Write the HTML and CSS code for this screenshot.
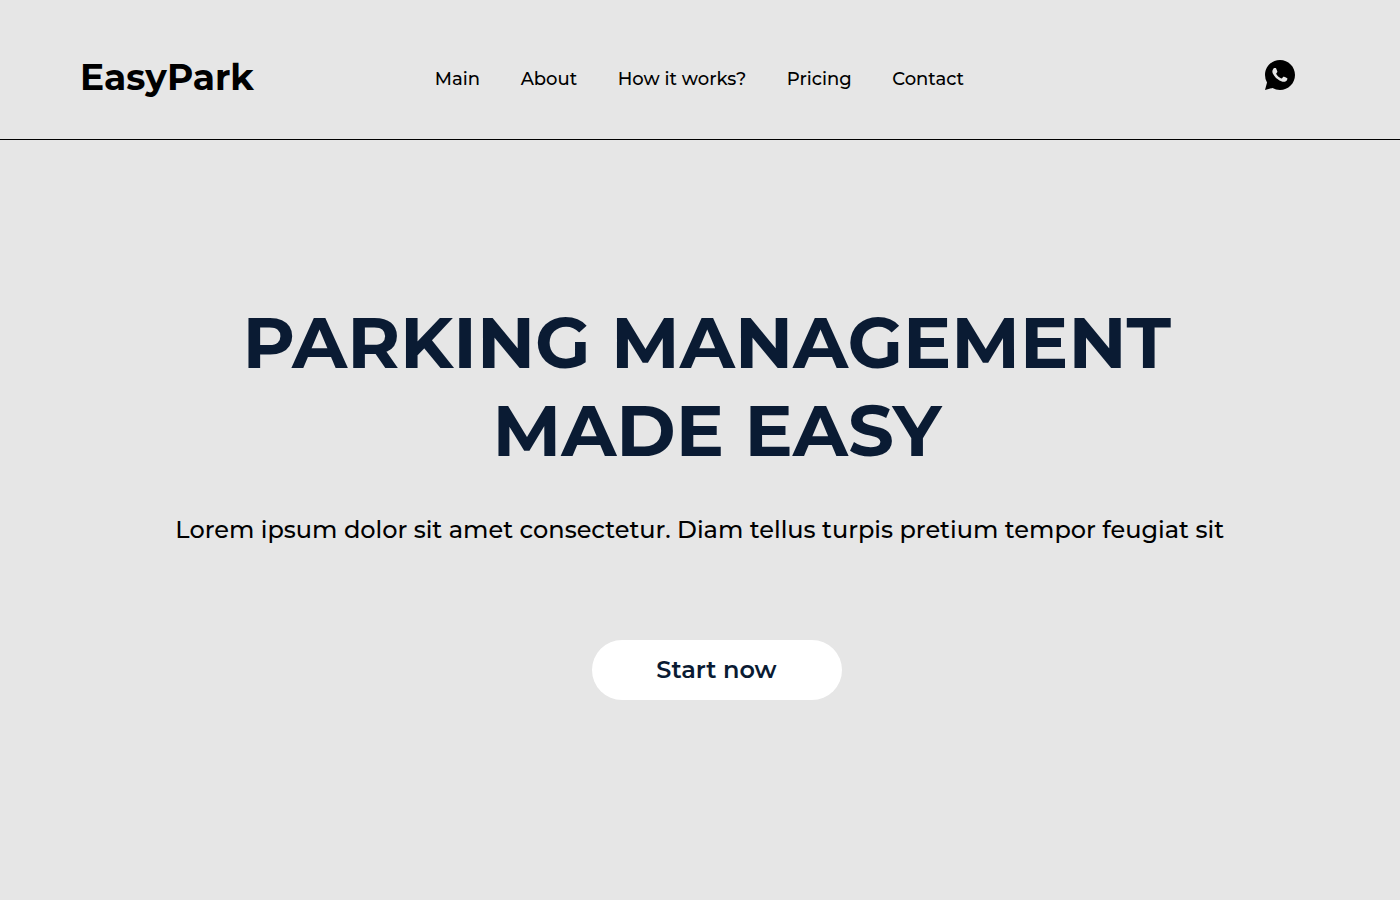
FILE: index.html
```
<!DOCTYPE html>
<html lang="en">
<head>
<meta charset="utf-8">
<title>EasyPark</title>
<link rel="stylesheet" href="styles.css">
</head>
<body>
<header class="header">
  <a class="logo">EasyPark</a>
  <nav class="nav">
    <a>Main</a>
    <a>About</a>
    <a>How it works?</a>
    <a>Pricing</a>
    <a>Contact</a>
  </nav>
  <a class="whatsapp" aria-label="WhatsApp">
    <svg width="30" height="30" viewBox="0 0 20 20">
      <path fill="#000" d="M0.004 20l1.352-4.968A9.954 9.954 0 0 1 0 10.001C0 4.478 4.478 0 10.001 0S20 4.478 20 10.001 15.524 20 10.001 20a9.954 9.954 0 0 1-5.03-1.355L0.004 20zM6.391 5.308a.961.961 0 0 0-.371.1 1.293 1.293 0 0 0-.294.228c-.12.113-.188.211-.261.306A2.729 2.729 0 0 0 4.9 7.62c.002.49.13.967.33 1.413.409.902 1.082 1.857 1.971 2.742.214.213.423.427.648.626a9.448 9.448 0 0 0 3.84 2.046l.569.087c.185.01.37-.004.556-.013a1.99 1.99 0 0 0 .833-.231c.166-.088.244-.132.383-.22 0 0 .043-.028.125-.09.135-.1.218-.171.33-.288.083-.086.155-.187.21-.302.078-.163.156-.474.188-.733.024-.198.017-.306.014-.373-.004-.107-.093-.218-.19-.265l-.582-.261s-.87-.379-1.401-.621a.498.498 0 0 0-.177-.041.482.482 0 0 0-.378.127c-.005-.002-.072.055-.795.931a.35.35 0 0 1-.368.13 1.416 1.416 0 0 1-.191-.066c-.124-.052-.167-.072-.252-.109a6.025 6.025 0 0 1-1.575-1.003c-.126-.11-.243-.23-.363-.346a6.298 6.298 0 0 1-1.02-1.268l-.059-.095a.923.923 0 0 1-.102-.205c-.038-.147.061-.265.061-.265s.243-.266.356-.41a4.38 4.38 0 0 0 .263-.373c.118-.19.155-.385.093-.536-.28-.684-.57-1.365-.868-2.041-.059-.134-.234-.23-.393-.249-.054-.006-.108-.012-.162-.016a3.385 3.385 0 0 0-.403.004z"/>
    </svg>
  </a>
</header>
<main class="hero">
  <h1 class="title">PARKING MANAGEMENT 
MADE EASY</h1>
  <p class="subtitle">Lorem ipsum dolor sit amet consectetur. Diam tellus turpis pretium tempor feugiat sit</p>
  <button class="cta">Start now</button>
</main>
</body>
</html>
```
FILE: styles.css
```
body {
  margin: 0;
  background: #e6e6e6;
  font-family: Montserrat, Inter, sans-serif;
  color: #000;
}

.header {
  box-sizing: border-box;
  display: flex;
  align-items: flex-start;
  height: 140px;
  padding: 0 105px 0 80px;
  border-bottom: 1px solid #000;
}

.logo {
  width: 354.8px;
  padding-top: 55px;
  font-size: 36px;
  font-weight: 700;
  line-height: 44px;
}

.nav {
  display: flex;
  gap: 40.6px;
  padding-top: 68px;
  font-size: 18px;
  font-weight: 500;
  line-height: 22px;
}

.whatsapp {
  margin-left: auto;
  padding-top: 60px;
}

.whatsapp svg {
  display: block;
}

.hero {
  display: flex;
  flex-direction: column;
  align-items: center;
  padding: 158px 0 0 34px;
}

.title {
  margin: 0;
  font-size: 72px;
  font-weight: 700;
  line-height: 88px;
  text-align: center;
  white-space: pre;
  color: #0a1b33;
}

.subtitle {
  margin: 41px 34.6px 0 0;
  font-size: 24px;
  font-weight: 500;
  line-height: 29px;
}

.cta {
  width: 250px;
  height: 60px;
  margin-top: 96px;
  padding: 0 1px 2px 0;
  border: 0;
  border-radius: 30px;
  background: #fff;
  color: #0a1b33;
  font-family: inherit;
  font-size: 24px;
  font-weight: 600;
}
```
